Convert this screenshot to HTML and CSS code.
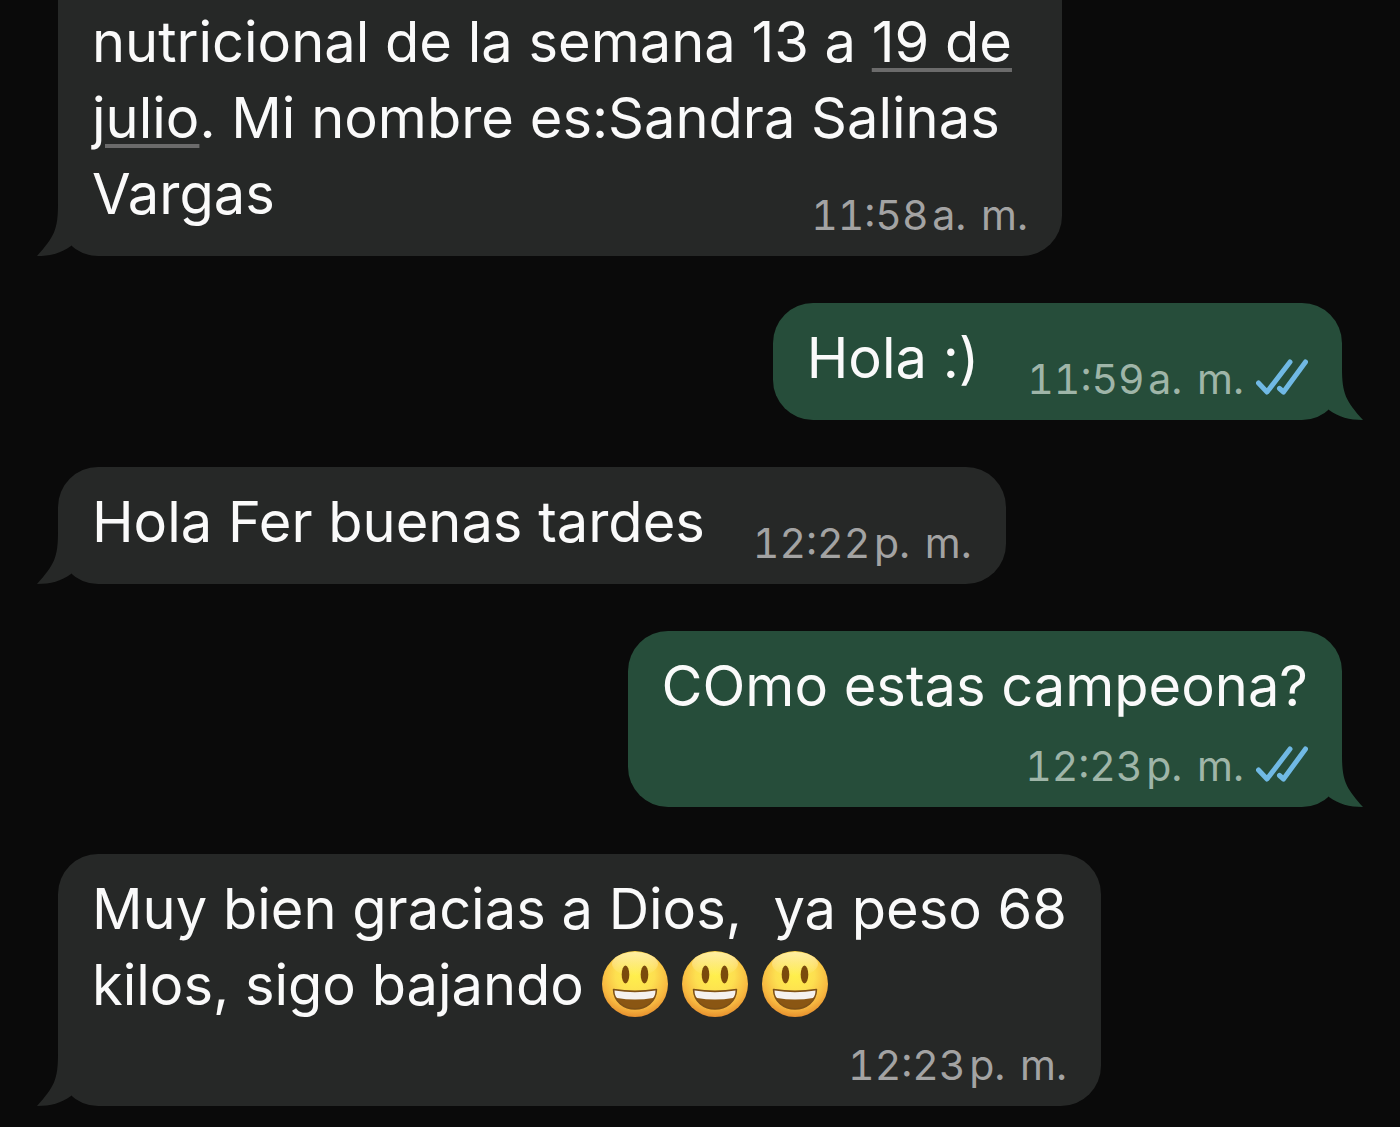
FILE: index.html
```html
<!DOCTYPE html>
<html lang="es">
<head>
<meta charset="utf-8">
<meta name="viewport" content="width=device-width, initial-scale=1">
<title>Chat</title>
<link rel="stylesheet" href="styles.css">
</head>
<body>
<svg class="defs" aria-hidden="true">
  <defs>
    <radialGradient id="face" cx="0.5" cy="0.36" r="0.66">
      <stop offset="0" stop-color="#fff04c"/>
      <stop offset="0.45" stop-color="#fddf50"/>
      <stop offset="0.78" stop-color="#f7b740"/>
      <stop offset="1" stop-color="#e38a2b"/>
    </radialGradient>
    <linearGradient id="shine" x1="0" y1="0" x2="0" y2="1">
      <stop offset="0" stop-color="#fff3b8" stop-opacity="0.8"/>
      <stop offset="1" stop-color="#fff3b8" stop-opacity="0"/>
    </linearGradient>
    <symbol id="grin" viewBox="0 0 66 66">
      <circle cx="33" cy="33" r="33" fill="url(#face)"/>
      <ellipse cx="33" cy="13" rx="23" ry="12" fill="url(#shine)"/>
      <ellipse cx="23.500" cy="23.500" rx="3.800" ry="9" fill="#7a4a0c"/>
      <ellipse cx="42.500" cy="23.500" rx="3.800" ry="9" fill="#7a4a0c"/>
      <path d="M11.500 38.500Q33 42 54.500 38.500C54 51 44 58 33 58S12 51 11.500 38.500Z" fill="#8a5613" stroke="#7c5017" stroke-width="1.500" stroke-linejoin="round"/>
      <path d="M12.500 39.500Q33 43 53.500 39.500C53.500 43 52.500 45.500 51 47Q33 50 15 47C13.500 45.500 12.500 43 12.500 39.500Z" fill="#f4f1ee"/>
    </symbol>
    <symbol id="tail" viewBox="0 0 34 52">
      <path d="M21 0C21 26 17 33 0 52C14 52 24 49 34 42V0Z" fill="currentColor"/>
    </symbol>
    <symbol id="ticks" viewBox="0 0 52 40">
      <path d="M2.500 24L11 33L34 3M23.500 29.500L27.500 33L49.500 3" fill="none" stroke="currentColor" stroke-width="5" stroke-linecap="round" stroke-linejoin="round"/>
    </symbol>
  </defs>
</svg>
<main class="chat">
  <article class="bubble received continued">
    <p class="text">nutricional de la semana 13 a <a href="#fecha">19 de<br>julio</a>. Mi nombre es:Sandra Salinas<br>Vargas</p>
    <div class="meta"><time datetime="11:58">11:58&#8202;a.&#8202; m.</time></div>
    <svg class="tail" aria-hidden="true"><use href="#tail"/></svg>
  </article>
  <article class="bubble sent inline">
    <p class="text">Hola :)</p>
    <div class="meta"><time datetime="11:59">11:59&#8202;a.&#8202; m.</time><svg class="ticks" role="img" aria-label="Leído"><use href="#ticks"/></svg></div>
    <svg class="tail" aria-hidden="true"><use href="#tail"/></svg>
  </article>
  <article class="bubble received inline">
    <p class="text">Hola Fer buenas tardes</p>
    <div class="meta"><time datetime="12:22">12:22&#8202;p.&#8202; m.</time></div>
    <svg class="tail" aria-hidden="true"><use href="#tail"/></svg>
  </article>
  <article class="bubble sent stacked">
    <p class="text">COmo estas campeona?</p>
    <div class="meta"><time datetime="12:23">12:23&#8202;p.&#8202; m.</time><svg class="ticks" role="img" aria-label="Leído"><use href="#ticks"/></svg></div>
    <svg class="tail" aria-hidden="true"><use href="#tail"/></svg>
  </article>
  <article class="bubble received stacked">
    <p class="text">Muy bien gracias a Dios,&nbsp; ya peso 68<br>kilos, sigo bajando <span class="emojis"><svg class="emoji" role="img" aria-label="Cara sonriente"><use href="#grin"/></svg><svg class="emoji" role="img" aria-label="Cara sonriente"><use href="#grin"/></svg><svg class="emoji" role="img" aria-label="Cara sonriente"><use href="#grin"/></svg></span></p>
    <div class="meta"><time datetime="12:23">12:23&#8202;p.&#8202; m.</time></div>
    <svg class="tail" aria-hidden="true"><use href="#tail"/></svg>
  </article>
</main>
</body>
</html>
```
FILE: styles.css
```css
* {
  box-sizing: border-box;
}

body {
  margin: 0;
  background: #0a0a0a;
  color: #fafafa;
  font-family: Inter, "Liberation Sans", sans-serif;
}

.defs {
  position: absolute;
  width: 0;
  height: 0;
}

.chat {
  display: flex;
  flex-direction: column;
  align-items: flex-start;
  gap: 47px;
  padding: 0 58px 21px;
}

.bubble {
  position: relative;
  display: grid;
  padding: 17px 34px 16px;
  border-radius: 40px;
  background: #262827;
}

.sent {
  align-self: flex-end;
  background: #264d3a;
}

.continued {
  padding-top: 4px;
  border-top-left-radius: 0;
  border-top-right-radius: 0;
}

.continued .text,
.continued .meta {
  grid-area: 1 / 1;
}

.continued .text {
  padding-right: 16px;
}

.inline {
  grid-auto-flow: column;
  column-gap: 48px;
}

.stacked {
  row-gap: 9px;
}

.text {
  margin: 0;
  padding-bottom: 8px;
  font-size: 56px;
  line-height: 76px;
  white-space: nowrap;
}

.text a {
  color: inherit;
  text-decoration: underline 4px #6b6b6b;
  text-underline-offset: 6px;
}

.meta {
  display: flex;
  align-items: center;
  align-self: end;
  justify-self: end;
  gap: 12px;
  color: #a3a3a3;
  font-size: 41px;
  line-height: 50px;
  font-variant-numeric: tabular-nums;
  white-space: nowrap;
}

.sent .meta {
  color: #9fb5a8;
}

.ticks {
  width: 52px;
  height: 40px;
  color: #70b9e4;
}

.emojis {
  display: inline-flex;
  gap: 14px;
  margin-left: 2px;
  vertical-align: -12px;
}

.emoji {
  width: 66px;
  height: 66px;
}

.tail {
  position: absolute;
  bottom: 0;
  left: -21px;
  width: 34px;
  height: 52px;
  color: #262827;
}

.sent .tail {
  right: -21px;
  left: auto;
  color: #264d3a;
  transform: scaleX(-1);
}
```
